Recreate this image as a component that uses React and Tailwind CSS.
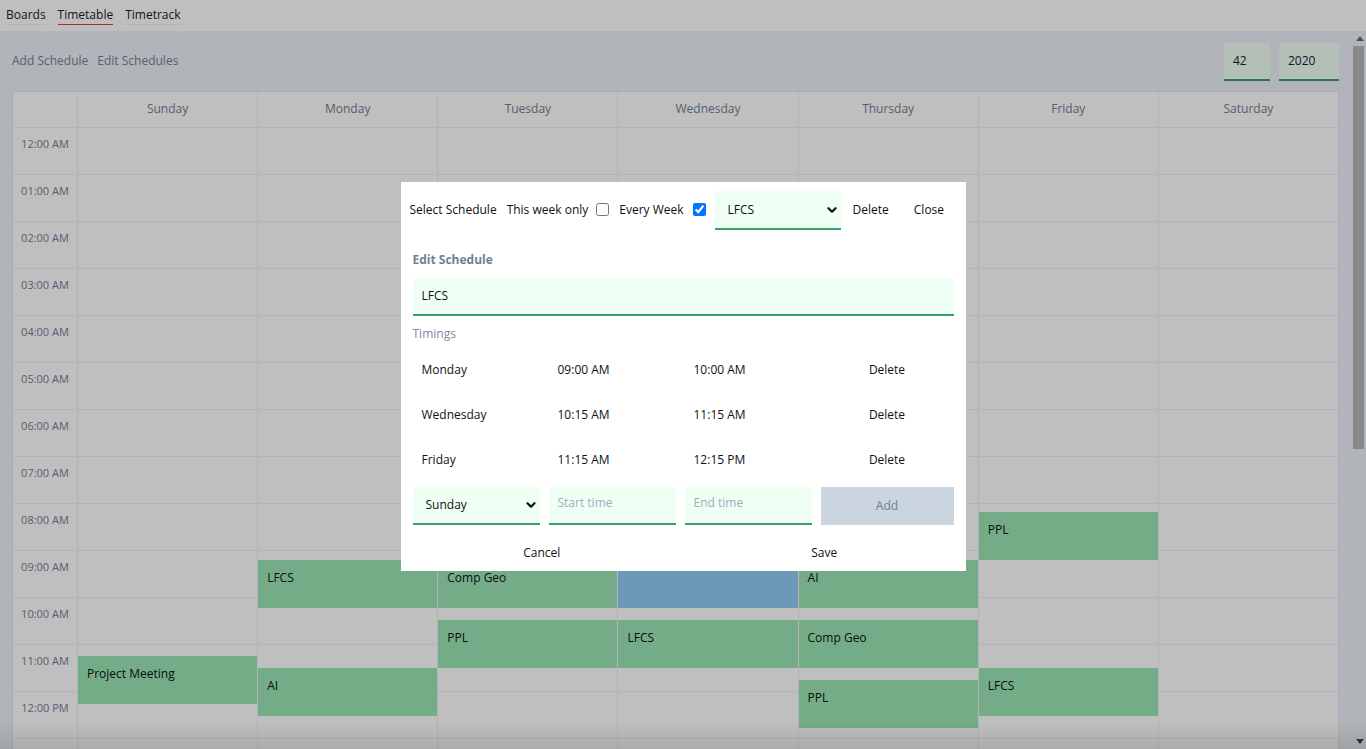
import { useState } from 'react'

const days = ['Sunday', 'Monday', 'Tuesday', 'Wednesday', 'Thursday', 'Friday', 'Saturday']

// hour rows shown in the left column
const hours = Array.from({ length: 24 }, (_, i) => {
  const h = i % 12 === 0 ? 12 : i % 12
  return `${String(h).padStart(2, '0')}:00 ${i < 12 ? 'AM' : 'PM'}`
})

// start / end in hours, day index 0 = Sunday
const events = [
  { day: 0, start: 11, end: 12, title: 'Project Meeting' },
  { day: 1, start: 9, end: 10, title: 'LFCS' },
  { day: 1, start: 11.25, end: 12.25, title: 'AI' },
  { day: 2, start: 9, end: 10, title: 'Comp Geo' },
  { day: 2, start: 10.25, end: 11.25, title: 'PPL' },
  { day: 3, start: 8.5, end: 10, title: 'Algorithms', blue: true },
  { day: 3, start: 10.25, end: 11.25, title: 'LFCS' },
  { day: 4, start: 9, end: 10, title: 'AI' },
  { day: 4, start: 10.25, end: 11.25, title: 'Comp Geo' },
  { day: 4, start: 11.5, end: 12.5, title: 'PPL' },
  { day: 5, start: 8, end: 9, title: 'PPL' },
  { day: 5, start: 11.25, end: 12.25, title: 'LFCS' },
]

const timings = [
  { day: 'Monday', start: '09:00 AM', end: '10:00 AM' },
  { day: 'Wednesday', start: '10:15 AM', end: '11:15 AM' },
  { day: 'Friday', start: '11:15 AM', end: '12:15 PM' },
]

const HOUR = 48

function Chevron() {
  return (
    <svg className="w-[10px] h-[10px] shrink-0" viewBox="0 0 10 10" fill="none">
      <path d="M1.5 3.2 L5 6.7 L8.5 3.2" stroke="#111" strokeWidth="2.2" strokeLinecap="round" strokeLinejoin="round" />
    </svg>
  )
}

function NavLink({ label, active }) {
  return (
    <a className={`leading-[18px] border-b ${active ? 'border-[#e53e3e]' : 'border-[#f0f0f0]'} cursor-pointer`}>
      {label}
    </a>
  )
}

// thin classic scrollbar next to the scrolling area
function ScrollStrip() {
  return (
    <div className="w-[13px] shrink-0 flex flex-col">
      <div className="h-[15px] flex items-center justify-center pl-[1px]">
        <svg width="8" height="5" viewBox="0 0 8 5">
          <polygon points="0,5 8,5 4,0" fill="#6e6e6e" />
        </svg>
      </div>
      <div className="h-[403px] w-[11px] bg-[#b9b9b9]" />
      <div className="flex-1" />
      <div className="h-[15px] flex items-center justify-center pl-[1px]">
        <svg width="8" height="5" viewBox="0 0 8 5">
          <polygon points="0,0 8,0 4,5" fill="#444" />
        </svg>
      </div>
    </div>
  )
}

function DayColumn({ index }) {
  const dayEvents = events.filter((e) => e.day === index)
  return (
    <div className={`relative flex-1 min-w-0 ${index < 6 ? 'border-r border-[#edf2f7]' : ''}`}>
      {hours.map((h) => (
        <div key={h} className="h-[47px] border-b border-[#edf2f7]" />
      ))}
      {dayEvents.map((ev) => (
        <div
          key={ev.title + ev.start}
          className={`absolute left-0 right-0 px-[9px] pt-[10px] leading-[16px] text-[#111] ${
            ev.blue ? 'bg-[#90cdf4]' : 'bg-[#9ae6b4]'
          }`}
          style={{ top: ev.start * HOUR, height: (ev.end - ev.start) * HOUR }}
        >
          {ev.title}
        </div>
      ))}
    </div>
  )
}

function Calendar() {
  return (
    <div className="bg-white border border-[#e2e8f0]">
      <div className="flex h-[36px] border-b border-[#edf2f7]">
        <div className="w-[65px] shrink-0 border-r border-[#edf2f7]" />
        {days.map((d, i) => (
          <div
            key={d}
            className={`flex-1 min-w-0 flex items-center justify-center pb-[1px] text-[#718096] ${i < 6 ? 'border-r border-[#edf2f7]' : ''}`}
          >
            {d}
          </div>
        ))}
      </div>
      <div className="flex">
        <div className="w-[65px] shrink-0 border-r border-[#edf2f7]">
          {hours.map((h) => (
            <div key={h} className="h-[47px] border-b border-[#edf2f7] pt-[8px] text-center text-[11px] leading-[16px] text-[#718096]">
              {h}
            </div>
          ))}
        </div>
        {days.map((d, i) => (
          <DayColumn key={d} index={i} />
        ))}
      </div>
    </div>
  )
}

function EditModal() {
  const [thisWeek, setThisWeek] = useState(false)
  const [everyWeek, setEveryWeek] = useState(true)

  return (
    <div className="w-[565px] bg-white text-[#111]">
      <div className="flex items-center pl-[9px] pt-[9px] whitespace-nowrap">
        <span className="mr-[10px] -mt-[2px]">Select Schedule</span>
        <span className="mr-[8px] -mt-[2px]">This week only</span>
        <input
          type="checkbox"
          checked={thisWeek}
          onChange={() => setThisWeek(!thisWeek)}
          className="w-[13px] h-[13px] mr-[10px] -mt-[3px]"
        />
        <span className="mr-[9px] -mt-[2px]">Every Week</span>
        <input
          type="checkbox"
          checked={everyWeek}
          onChange={() => setEveryWeek(!everyWeek)}
          className="w-[13px] h-[13px] mr-[10px] -mt-[3px]"
        />
        <div className="w-[126px] h-[39px] mr-[12px] -ml-[1px] flex items-center justify-between pl-[13px] pr-[4px] bg-[#f0fff4] border-b-2 border-[#38a169]">
          <span>LFCS</span>
          <Chevron />
        </div>
        <span className="mr-[25px] -mt-[2px]">Delete</span>
        <span className="-mt-[2px]">Close</span>
      </div>

      <div className="px-3">
        <div className="mt-[22px] text-[12px] leading-[16px] font-bold text-[#718096]">Edit Schedule</div>
        <div className="mt-[10px] h-[38px] flex items-center pl-[9px] bg-[#f0fff4] border-b-2 border-[#38a169]">
          LFCS
        </div>
        <div className="mt-[10px] leading-[16px] text-[#7d8aa0]">Timings</div>

        <div className="mt-[5px] grid grid-cols-[127px_127px_127px_1fr] gap-x-[9px]">
          {timings.map((t) => (
            <div key={t.day} className="contents">
              <div className="h-[45px] flex items-center pl-[9px]">{t.day}</div>
              <div className="h-[45px] flex items-center pl-[9px]">{t.start}</div>
              <div className="h-[45px] flex items-center pl-[9px]">{t.end}</div>
              <div className="h-[45px] flex items-center justify-center">Delete</div>
            </div>
          ))}
          <div className="mt-[5px] h-[38px] flex items-center justify-between pl-[13px] pr-[4px] bg-[#f0fff4] border-b-2 border-[#38a169]">
            <span>Sunday</span>
            <Chevron />
          </div>
          <div className="mt-[5px] h-[38px] flex items-center pl-[9px] pb-[4px] bg-[#f0fff4] border-b-2 border-[#38a169] text-[#a0aec0]">
            Start time
          </div>
          <div className="mt-[5px] h-[38px] flex items-center pl-[9px] pb-[4px] bg-[#f0fff4] border-b-2 border-[#38a169] text-[#a0aec0]">
            End time
          </div>
          <div className="mt-[5px] h-[38px] flex items-center justify-center bg-[#cbd5e0] text-[#718096]">Add</div>
        </div>
      </div>

      <div className="grid grid-cols-2 pt-[20px] pb-[10px] leading-[16px]">
        <span className="text-center">Cancel</span>
        <span className="text-center">Save</span>
      </div>
    </div>
  )
}

export default function App() {
  return (
    <div className="relative h-screen flex flex-col font-['Open_Sans',sans-serif] text-[12px] text-[#1a202c]">
      <nav className="h-[31px] shrink-0 bg-white flex items-start gap-3 pl-[6px] pt-[6px] text-[12px]">
        <NavLink label="Boards" />
        <NavLink label="Timetable" active />
        <NavLink label="Timetrack" />
      </nav>

      <div className="flex-1 min-h-0 flex bg-[#edf2f7]">
        <main className="flex-1 overflow-y-auto [scrollbar-width:none] pl-3 pr-[14px] pb-4">
          <div className="flex items-center pt-3 mb-[10px]">
            <div className="flex gap-[9px] pb-[3px] text-[#718096]">
              <span>Add Schedule</span>
              <span>Edit Schedules</span>
            </div>
            <div className="ml-auto flex gap-[9px]">
              <div className="w-[46px] h-[38px] flex items-center pl-[9px] bg-[#f0fff4] border-b-2 border-[#38a169]">42</div>
              <div className="w-[60px] h-[38px] flex items-center pl-[9px] bg-[#f0fff4] border-b-2 border-[#38a169]">2020</div>
            </div>
          </div>
          <Calendar />
        </main>
        <ScrollStrip />
      </div>

      {/* backdrop + dialog */}
      <div className="fixed inset-0 bg-black/25 flex justify-center items-start pt-[182px]">
        <EditModal />
      </div>
      <div className="pointer-events-none fixed left-0 right-0 bottom-0 h-[28px] bg-gradient-to-b from-transparent to-black/10" />
    </div>
  )
}
